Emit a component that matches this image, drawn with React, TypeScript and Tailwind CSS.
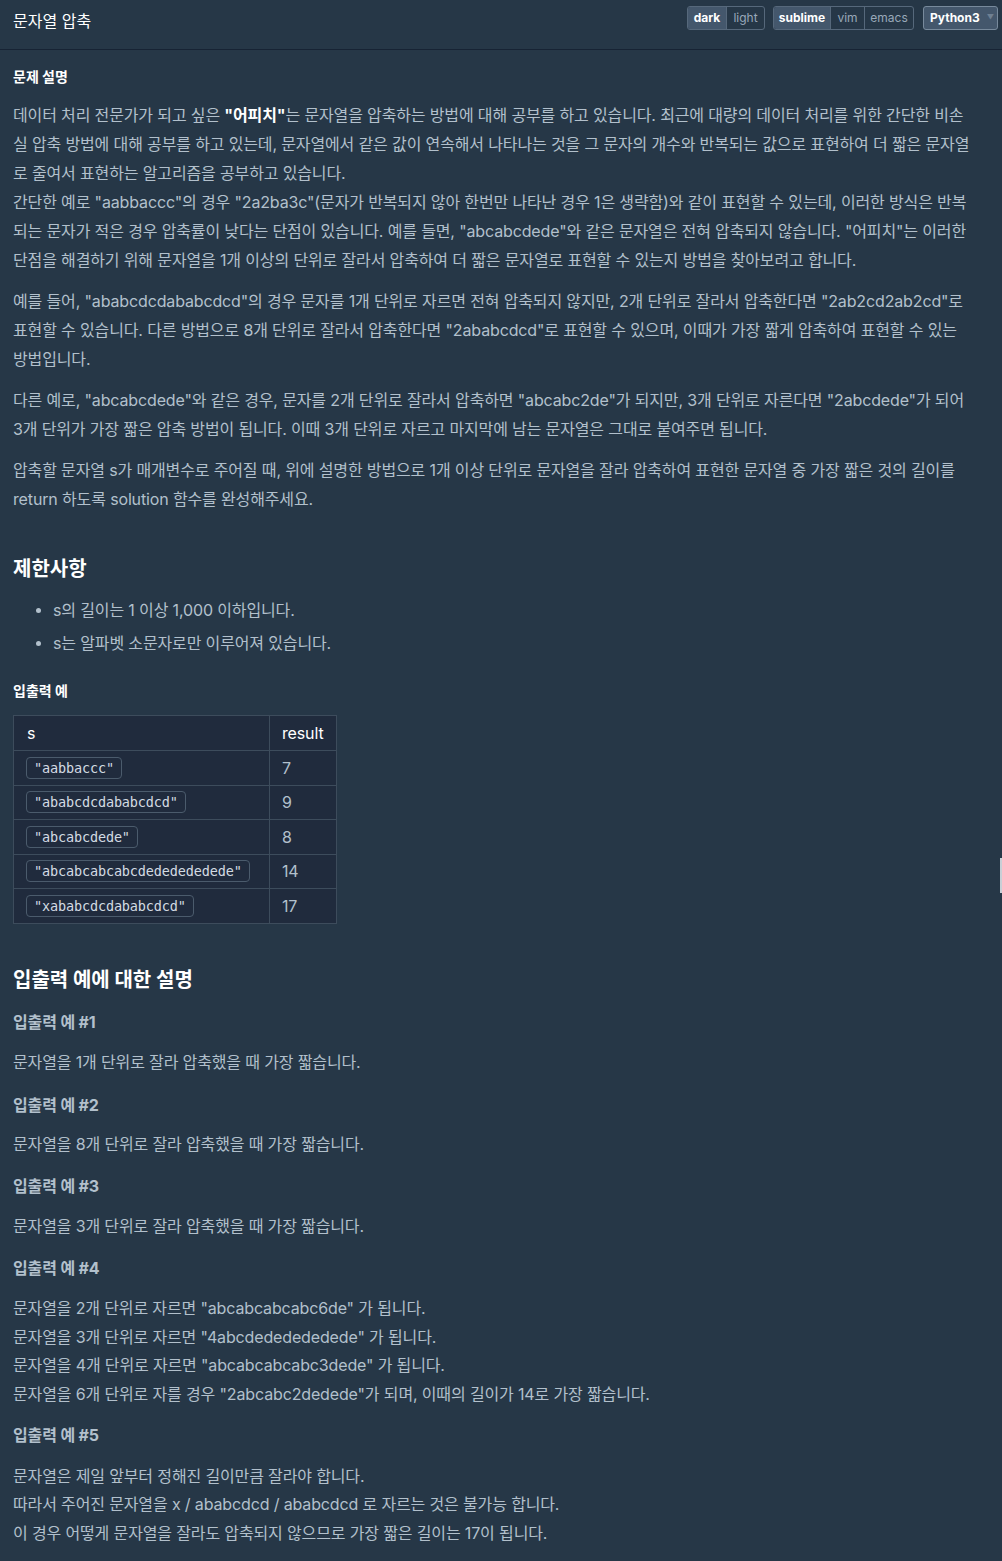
import React from "react";

const font = { fontFamily: 'Inter, "Noto Sans CJK KR", sans-serif' };

function Code({ children }: { children: React.ReactNode }) {
  return (
    <code
      className="inline-block rounded-[4px] border border-[#4b5b6c] px-[7px] py-[1px] text-[13.5px] leading-[18px] text-[#d3dbe3]"
      style={{ fontFamily: '"DejaVu Sans Mono", monospace' }}
    >
      {children}
    </code>
  );
}

const rows: [string, string][] = [
  ['"aabbaccc"', "7"],
  ['"ababcdcdababcdcd"', "9"],
  ['"abcabcdede"', "8"],
  ['"abcabcabcabcdededededede"', "14"],
  ['"xababcdcdababcdcd"', "17"],
];

export default function App() {
  return (
    <div className="relative min-h-[1561px] w-[1002px] bg-[#263747] text-[#b2c0cc]" style={font}>
      <div className="flex h-[50px] items-start justify-between border-b border-[#172334] pl-[13px] pr-[4px]">
        <div className="pt-[9px] text-[16px] leading-[24px] text-white">문자열 압축</div>
        <div className="flex pt-[6px] text-[12px]">
          <div className="flex h-[24px] w-[78px] overflow-hidden rounded-[3px] border border-[#56687b]">
            <span className="flex w-[38px] items-center justify-center bg-[#44576c] font-bold text-white">dark</span>
            <span className="flex flex-1 items-center justify-center border-l border-[#56687b] text-[#98a8b9]">light</span>
          </div>
          <div className="ml-[8px] flex h-[24px] w-[141px] overflow-hidden rounded-[3px] border border-[#56687b]">
            <span className="flex w-[57px] items-center justify-center border-r border-[#56687b] bg-[#44576c] font-bold text-white">sublime</span>
            <span className="flex w-[34px] items-center justify-center border-r border-[#56687b] text-[#98a8b9]">vim</span>
            <span className="flex flex-1 items-center justify-center text-[#98a8b9]">emacs</span>
          </div>
          <div className="ml-[9px] flex h-[24px] w-[75px] items-center rounded-[3px] border border-[#788a9c] bg-[#44576c] pl-[6px] font-bold text-white">
            Python3
            <span className="ml-[7px] text-[7px] text-[#6f8092]">▼</span>
          </div>
        </div>
      </div>

      <div className="pl-[13px] pr-[27px] pt-[16px] text-[16px] leading-[29px] tracking-[-0.14px]">
        <h6 className="mb-[13px] text-[14px] font-bold leading-[22px] tracking-normal text-white">문제 설명</h6>
        <p className="mb-[12px]">
          데이터 처리 전문가가 되고 싶은 <b className="text-white">"어피치"</b>는 문자열을 압축하는 방법에 대해 공부를 하고 있습니다. 최근에 대량의 데이터 처리를 위한 간단한 비손실 압축 방법에 대해 공부를 하고 있는데, 문자열에서 같은 값이 연속해서 나타나는 것을 그 문자의 개수와 반복되는 값으로 표현하여 더 짧은 문자열로 줄여서 표현하는 알고리즘을 공부하고 있습니다.
          <br />
          간단한 예로 "aabbaccc"의 경우 "2a2ba3c"(문자가 반복되지 않아 한번만 나타난 경우 1은 생략함)와 같이 표현할 수 있는데, 이러한 방식은 반복되는 문자가 적은 경우 압축률이 낮다는 단점이 있습니다. 예를 들면, "abcabcdede"와 같은 문자열은 전혀 압축되지 않습니다. "어피치"는 이러한 단점을 해결하기 위해 문자열을 1개 이상의 단위로 잘라서 압축하여 더 짧은 문자열로 표현할 수 있는지 방법을 찾아보려고 합니다.
        </p>
        <p className="mb-[12px]">
          예를 들어, "ababcdcdababcdcd"의 경우 문자를 1개 단위로 자르면 전혀 압축되지 않지만, 2개 단위로 잘라서 압축한다면 "2ab2cd2ab2cd"로 표현할 수 있습니다. 다른 방법으로 8개 단위로 잘라서 압축한다면 "2ababcdcd"로 표현할 수 있으며, 이때가 가장 짧게 압축하여 표현할 수 있는 방법입니다.
        </p>
        <p className="mb-[12px]">
          다른 예로, "abcabcdede"와 같은 경우, 문자를 2개 단위로 잘라서 압축하면 "abcabc2de"가 되지만, 3개 단위로 자른다면 "2abcdede"가 되어 3개 단위가 가장 짧은 압축 방법이 됩니다. 이때 3개 단위로 자르고 마지막에 남는 문자열은 그대로 붙여주면 됩니다.
        </p>
        <p>
          압축할 문자열 s가 매개변수로 주어질 때, 위에 설명한 방법으로 1개 이상 단위로 문자열을 잘라 압축하여 표현한 문자열 중 가장 짧은 것의 길이를 return 하도록 solution 함수를 완성해주세요.
        </p>

        <h5 className="mt-[40px] text-[20px] font-bold leading-[30px] tracking-normal text-white">제한사항</h5>
        <ul className="mt-[10px] pl-[23px]">
          <li className="flex items-start leading-[33px]">
            <span className="mr-[12px] mt-[14px] h-[5px] w-[5px] shrink-0 rounded-full bg-[#b2c0cc]" />
            s의 길이는 1 이상 1,000 이하입니다.
          </li>
          <li className="flex items-start leading-[33px]">
            <span className="mr-[12px] mt-[14px] h-[5px] w-[5px] shrink-0 rounded-full bg-[#b2c0cc]" />
            s는 알파벳 소문자로만 이루어져 있습니다.
          </li>
        </ul>

        <h5 className="mt-[20px] text-[14px] font-bold leading-[22px] tracking-normal text-white">입출력 예</h5>
        <table className="mt-[13px] border-collapse bg-[#202b3d]">
          <thead>
            <tr>
              <th className="h-[35px] w-[256px] border border-[#3d4c5c] px-[13px] text-left font-normal text-white">s</th>
              <th className="h-[35px] w-[67px] border border-[#3d4c5c] px-[12px] text-left font-normal text-white">result</th>
            </tr>
          </thead>
          <tbody>
            {rows.map(([s, r]) => (
              <tr key={s}>
                <td className="h-[34.5px] border border-[#3d4c5c] px-[12px] leading-[20px]">
                  <Code>{s}</Code>
                </td>
                <td className="h-[34.5px] border border-[#3d4c5c] px-[12px] leading-[20px]">{r}</td>
              </tr>
            ))}
          </tbody>
        </table>

        <h5 className="mt-[41px] text-[20px] font-bold leading-[30px] tracking-normal text-white">입출력 예에 대한 설명</h5>

        <h6 className="mt-[15px] font-bold leading-[24px]">입출력 예 #1</h6>
        <p className="mt-[14.5px]">문자열을 1개 단위로 잘라 압축했을 때 가장 짧습니다.</p>

        <h6 className="mt-[15.5px] font-bold leading-[24px]">입출력 예 #2</h6>
        <p className="mt-[13px]">문자열을 8개 단위로 잘라 압축했을 때 가장 짧습니다.</p>

        <h6 className="mt-[15.5px] font-bold leading-[24px]">입출력 예 #3</h6>
        <p className="mt-[13.5px]">문자열을 3개 단위로 잘라 압축했을 때 가장 짧습니다.</p>

        <h6 className="mt-[15px] font-bold leading-[24px]">입출력 예 #4</h6>
        <p className="mt-[14.5px] leading-[28.7px]">
          문자열을 2개 단위로 자르면 "abcabcabcabc6de" 가 됩니다.
          <br />
          문자열을 3개 단위로 자르면 "4abcdededededede" 가 됩니다.
          <br />
          문자열을 4개 단위로 자르면 "abcabcabcabc3dede" 가 됩니다.
          <br />
          문자열을 6개 단위로 자를 경우 "2abcabc2dedede"가 되며, 이때의 길이가 14로 가장 짧습니다.
        </p>

        <h6 className="mt-[14.5px] font-bold leading-[24px]">입출력 예 #5</h6>
        <p className="mt-[14.5px] leading-[28.5px]">
          문자열은 제일 앞부터 정해진 길이만큼 잘라야 합니다.
          <br />
          따라서 주어진 문자열을 x / ababcdcd / ababcdcd 로 자르는 것은 불가능 합니다.
          <br />
          이 경우 어떻게 문자열을 잘라도 압축되지 않으므로 가장 짧은 길이는 17이 됩니다.
        </p>
      </div>

      <div className="absolute right-0 top-[858px] h-[35px] w-[2px] bg-[#c8cfd6]" />
    </div>
  );
}
